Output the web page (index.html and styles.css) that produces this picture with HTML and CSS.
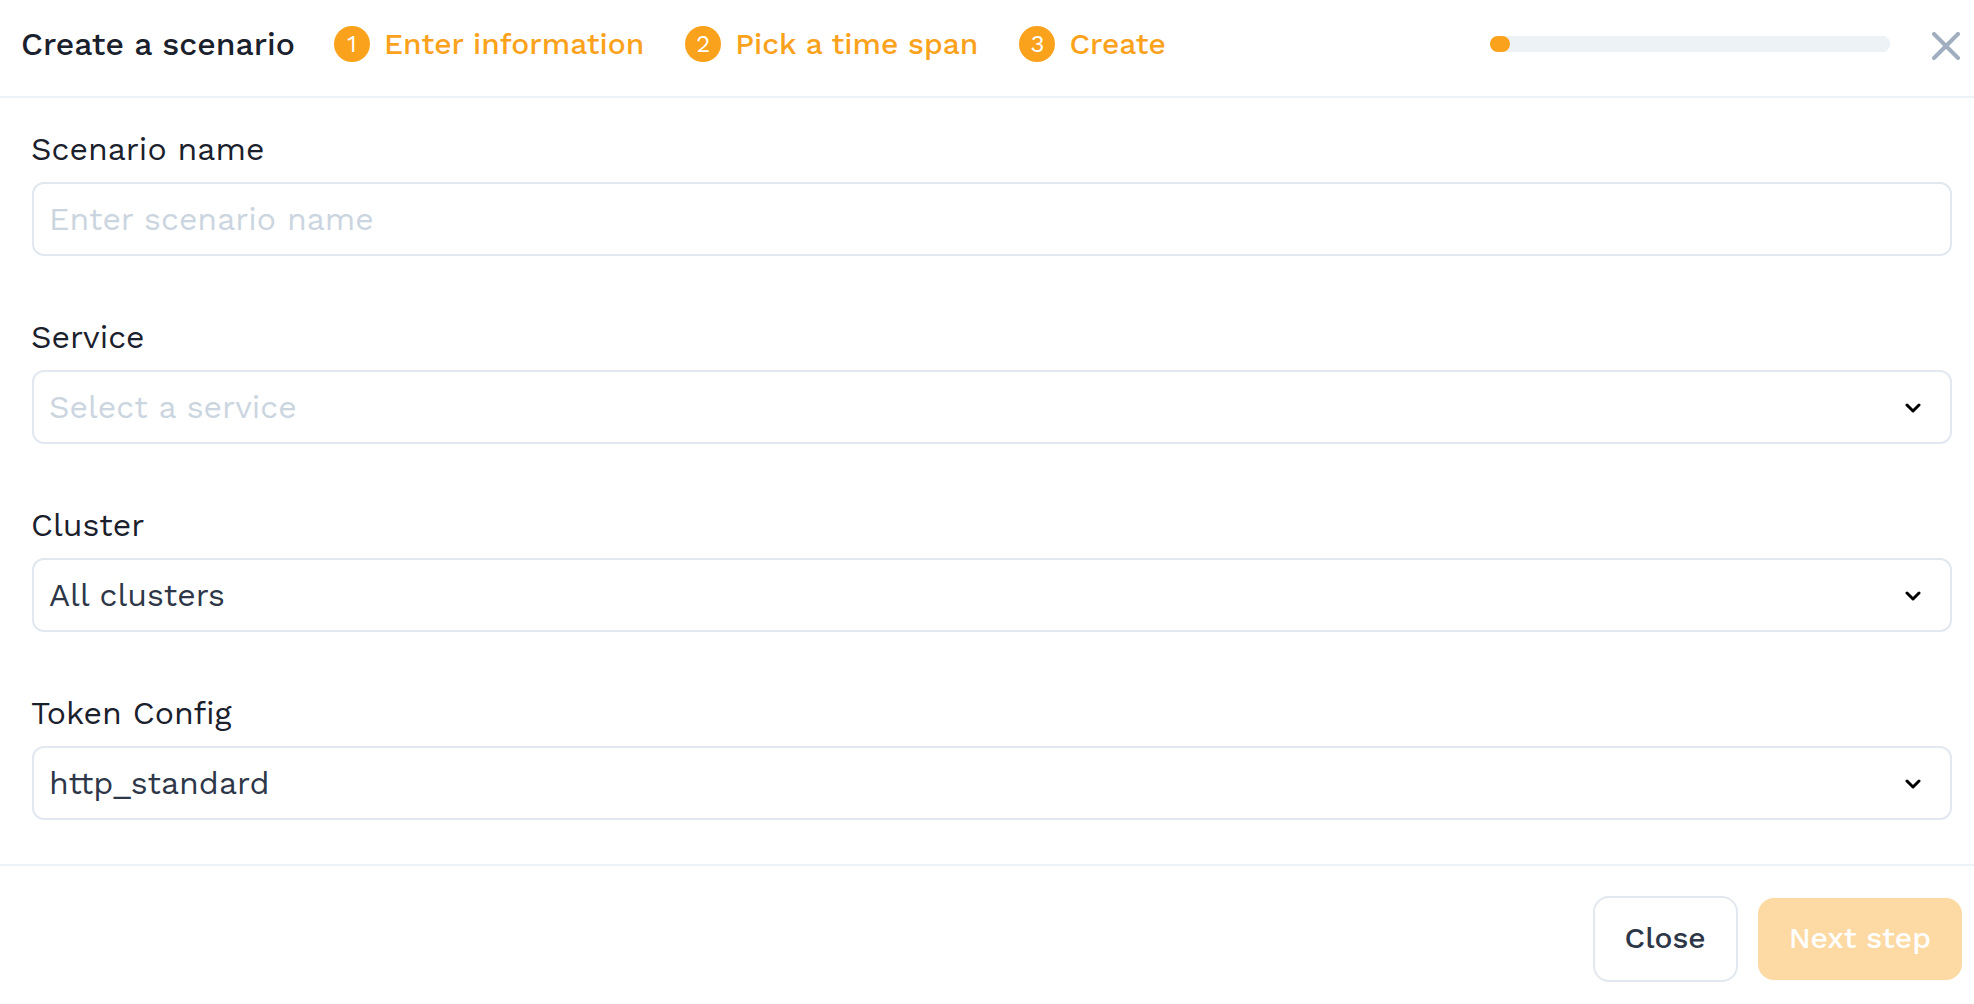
FILE: index.html
```html
<!DOCTYPE html>
<html lang="en">
<head>
<meta charset="utf-8">
<title>Create a scenario</title>
<meta name="viewport" content="width=device-width, initial-scale=1">
<link rel="stylesheet" href="styles.css">
</head>
<body>
<form class="wizard">
  <header class="header">
    <h1 class="title">Create a scenario</h1>
    <ol class="steps">
      <li class="step"><span class="step-number">1</span>Enter information</li>
      <li class="step"><span class="step-number">2</span>Pick a time span</li>
      <li class="step"><span class="step-number">3</span>Create</li>
    </ol>
    <progress class="progress" value="5" max="100" aria-label="Progress"></progress>
    <button class="dismiss" type="button" aria-label="Dismiss">
      <svg width="28" height="28" viewBox="0 0 28 28" fill="none" stroke="currentColor" stroke-width="4" stroke-linecap="round"><path d="M2 2L26 26M26 2L2 26"/></svg>
    </button>
  </header>
  <main class="fields">
    <div class="field">
      <label class="label" for="name">Scenario name</label>
      <input class="control" id="name" type="text" placeholder="Enter scenario name">
    </div>
    <div class="field">
      <label class="label" for="service">Service</label>
      <div class="select">
        <select class="control" id="service" required><option value="">Select a service</option></select>
        <svg class="chevron" width="18" height="12" viewBox="0 0 18 12" fill="none" stroke="currentColor" stroke-width="3" stroke-linecap="round" stroke-linejoin="round"><path d="M3 4L9 10L15 4"/></svg>
      </div>
    </div>
    <div class="field">
      <label class="label" for="cluster">Cluster</label>
      <div class="select">
        <select class="control" id="cluster"><option>All clusters</option></select>
        <svg class="chevron" width="18" height="12" viewBox="0 0 18 12" fill="none" stroke="currentColor" stroke-width="3" stroke-linecap="round" stroke-linejoin="round"><path d="M3 4L9 10L15 4"/></svg>
      </div>
    </div>
    <div class="field">
      <label class="label" for="token">Token Config</label>
      <div class="select">
        <select class="control" id="token"><option>http_standard</option></select>
        <svg class="chevron" width="18" height="12" viewBox="0 0 18 12" fill="none" stroke="currentColor" stroke-width="3" stroke-linecap="round" stroke-linejoin="round"><path d="M3 4L9 10L15 4"/></svg>
      </div>
    </div>
  </main>
  <footer class="footer">
    <button class="button button-outline" type="button">Close</button>
    <button class="button button-primary" type="submit" disabled>Next step</button>
  </footer>
</form>
</body>
</html>
```
FILE: styles.css
```css
* { box-sizing: border-box; }

body {
  margin: 0;
  background: #fff;
  color: #1a202c;
  font-family: "Work Sans", Inter, "Liberation Sans", sans-serif;
  font-size: 32px;
  line-height: 40px;
}

.header {
  display: flex;
  align-items: center;
  padding: 24px 14px 32px 21px;
  border-bottom: 2px solid #edf2f7;
}

.title {
  margin: 0 39px 0 0;
  font-size: 32px;
  font-weight: 500;
  line-height: 40px;
  white-space: nowrap;
}

.steps {
  display: flex;
  gap: 41px;
  margin: 0;
  padding: 0;
  list-style: none;
}

.step {
  display: flex;
  align-items: center;
  gap: 14px;
  color: #faa21b;
  font-size: 30px;
  font-weight: 500;
  white-space: nowrap;
}

.step-number {
  display: flex;
  align-items: center;
  justify-content: center;
  width: 36px;
  height: 36px;
  border-radius: 50%;
  background: #faa21b;
  color: #fff;
  font-size: 24px;
  font-weight: 400;
}

.progress {
  appearance: none;
  width: 400px;
  height: 16px;
  margin-left: auto;
  margin-right: 42px;
  border: 0;
  border-radius: 8px;
  background: #edf2f7;
}

.progress::-webkit-progress-bar {
  border-radius: 8px;
  background: #edf2f7;
}

.progress::-webkit-progress-value {
  border-radius: 8px;
  background: #faa21b;
}

.dismiss {
  padding: 4px 0 0;
  border: 0;
  background: none;
  color: #a0aec0;
}

.dismiss svg { display: block; }

.fields {
  display: grid;
  gap: 60px;
  padding: 30px 22px 44px 32px;
}

.field {
  display: grid;
  gap: 12px;
}

.label {
  margin-left: -1px;
  line-height: 42px;
}

.control {
  appearance: none;
  width: 100%;
  height: 74px;
  padding: 0 15px;
  border: 2px solid #e2e8f0;
  border-radius: 12px;
  background: none;
  color: #2d3748;
  font: inherit;
}

.control::placeholder { color: #cbd5e0; opacity: 1; }

select.control:invalid { color: #cbd5e0; }

.select {
  display: grid;
  align-items: center;
}

.select > * { grid-area: 1 / 1; }

.chevron {
  justify-self: end;
  margin-right: 30px;
  color: #000;
  pointer-events: none;
}

.footer {
  display: flex;
  align-items: center;
  justify-content: flex-end;
  gap: 20px;
  padding: 30px 12px 22px;
  border-top: 2px solid #edf2f7;
}

.button {
  padding: 20px 31px 22px;
  border: 0;
  border-radius: 16px;
  font: inherit;
  font-size: 30px;
  font-weight: 500;
}

.button-outline {
  padding: 20px 30px 22px;
  border: 2px solid #e2e8f0;
  background: #fff;
  color: #2d3748;
}

.button-primary {
  background: #fdd9a4;
  color: #fff;
}
```
